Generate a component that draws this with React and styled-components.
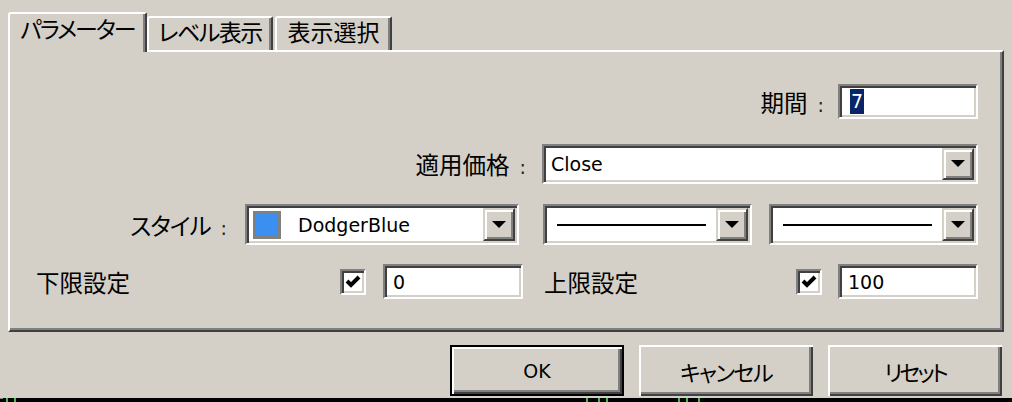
import React from "react";
import styled, { createGlobalStyle, css } from "styled-components";

const Global = createGlobalStyle`
  html, body { margin: 0; padding: 0; }
  body {
    background: #d4d0c8;
    width: 1012px;
    height: 402px;
    overflow: hidden;
    font-family: "DejaVu Sans", "Noto Sans CJK JP", sans-serif;
    color: #000;
  }
`;

const FACE = "#d4d0c8";

const Dialog = styled.div`
  width: 1012px;
  height: 398px;
  display: flex;
  flex-direction: column;
  box-sizing: border-box;
`;

const TabStrip = styled.div`
  height: 50px;
  display: flex;
  align-items: flex-end;
  padding-left: 8px;
`;

const Tab = styled.div`
  position: relative;
  box-sizing: border-box;
  display: flex;
  align-items: center;
  justify-content: center;
  width: ${(p) => p.$w}px;
  margin-left: ${(p) => p.$ml || 0}px;
  background: ${FACE};
  border-left: 2px solid #fff;
  border-top: 2px solid #fff;
  border-right: 2px solid #404040;
  border-top-left-radius: 3px;
  border-top-right-radius: 2px;
  box-shadow: inset -2px 0 0 #808080;
  font-family: "Noto Sans CJK JP", sans-serif;
  font-size: 23px;
  line-height: 1;
  letter-spacing: ${(p) => p.$ls || 0}px;
  font-feature-settings: "palt";
  white-space: nowrap;
  ${(p) =>
    p.$active
      ? css`
          height: 40px;
          margin-bottom: -2px;
          z-index: 1;
          padding-bottom: 10px;
        `
      : css`
          height: 34px;
          padding-bottom: 5px;
        `}
`;

const Panel = styled.div`
  margin-left: 8px;
  width: 996px;
  height: 282px;
  box-sizing: border-box;
  border-style: solid;
  border-width: 2px;
  border-color: #fff #404040 #404040 #fff;
  box-shadow: inset -2px -2px 0 #808080;
  padding: 32px 24px 0 26px;
  display: flex;
  flex-direction: column;
`;

const Row = styled.div`
  display: flex;
  align-items: center;
  justify-content: ${(p) => p.$justify || "flex-end"};
  height: ${(p) => p.$h}px;
  margin-top: ${(p) => p.$mt || 0}px;
`;

const Label = styled.span`
  font-family: "Noto Sans CJK JP", sans-serif;
  font-size: 23.5px;
  letter-spacing: ${(p) => p.$ls || 0}px;
  font-feature-settings: "palt";
  margin-right: ${(p) => p.$mr || 0}px;
  white-space: nowrap;
  flex: ${(p) => (p.$grow ? 1 : "none")};
`;

const Colon = styled.span`
  font-family: "DejaVu Sans", sans-serif;
  font-size: 19px;
  letter-spacing: 0;
  margin-left: 10px;
  color: #222;
`;

const sunken = css`
  box-sizing: border-box;
  border-style: solid;
  border-width: 2px;
  border-color: #808080 #fff #fff #808080;
  box-shadow: inset 2px 2px 0 #404040, inset -2px -2px 0 ${FACE};
  background: #fff;
`;

const TextBox = styled.div`
  ${sunken};
  width: ${(p) => p.$w}px;
  height: 35px;
  display: flex;
  align-items: center;
  padding-left: 8px;
  font-size: 19px;
  margin-left: ${(p) => p.$ml || 0}px;
`;

const Selected = styled.span`
  background: #0a246a;
  color: #fff;
  padding: 0 1px;
  line-height: 25px;
  margin-left: 2px;
`;

const Combo = styled.div`
  ${sunken};
  width: ${(p) => p.$w}px;
  height: ${(p) => p.$h || 40}px;
  padding: 2px;
  display: flex;
  align-items: stretch;
  margin-left: ${(p) => p.$ml || 0}px;
`;

const ComboValue = styled.div`
  flex: 1;
  display: flex;
  align-items: center;
  padding-left: ${(p) => p.$pl || 5}px;
  padding-right: ${(p) => p.$pr || 0}px;
  font-size: 19px;
`;

const DropButton = styled.div`
  box-sizing: border-box;
  width: 32px;
  border-style: solid;
  border-width: 2px;
  border-color: ${FACE} #404040 #404040 ${FACE};
  box-shadow: inset 2px 2px 0 #fff, inset -2px -2px 0 #808080;
  background: ${FACE};
  display: flex;
  align-items: center;
  justify-content: center;
`;

const Swatch = styled.div`
  width: 28px;
  height: 28px;
  box-sizing: border-box;
  border: 3px solid #808080;
  background: ${(p) => p.$color};
  margin-right: 17px;
`;

const LineSample = styled.div`
  flex: 1;
  height: 2px;
  background: #000;
`;

const Half = styled.div`
  display: flex;
  align-items: center;
  width: ${(p) => p.$w}px;
  margin-left: ${(p) => p.$ml || 0}px;
`;

const CheckBox = styled.div`
  ${sunken};
  width: 26px;
  height: 26px;
  display: flex;
  align-items: center;
  justify-content: center;
  margin-right: ${(p) => p.$mr}px;
`;

const ButtonBar = styled.div`
  display: flex;
  justify-content: flex-end;
  gap: 15px;
  padding-right: 10px;
  margin-top: 13px;
`;

const Button = styled.div`
  box-sizing: border-box;
  width: 174px;
  height: 51px;
  display: flex;
  align-items: center;
  justify-content: center;
  background: ${FACE};
  box-shadow: inset 2px 2px 0 #fff, inset -2px -2px 0 #404040,
    inset -4px -4px 0 #808080;
  ${(p) =>
    p.$default &&
    css`
      border: 2px solid #000;
    `}
`;

const ButtonText = styled.span`
  font-family: ${(p) =>
    p.$cjk ? '"Noto Sans CJK JP", sans-serif' : '"DejaVu Sans", sans-serif'};
  font-size: ${(p) => (p.$cjk ? 22 : 19)}px;
  letter-spacing: ${(p) => p.$ls || 0}px;
  font-feature-settings: "palt";
`;

const ChartStrip = styled.svg`
  display: block;
`;

const Arrow = () => (
  <svg width="14" height="8" viewBox="0 0 14 8">
    <polygon points="0,0 14,0 7,7" fill="#000" />
  </svg>
);

const Check = () => (
  <svg width="16" height="15" viewBox="0 0 16 15">
    <polyline
      points="2,7 6,11 14,3"
      fill="none"
      stroke="#000"
      strokeWidth="4"
      strokeLinecap="butt"
      strokeLinejoin="miter"
    />
  </svg>
);

const ComboBox = ({ w, children, pl, pr }) => (
  <Combo $w={w}>
    <ComboValue $pl={pl} $pr={pr}>
      {children}
    </ComboValue>
    <DropButton>
      <Arrow />
    </DropButton>
  </Combo>
);

export default function App() {
  return (
    <>
      <Global />
      <Dialog>
        <TabStrip>
          <Tab $active $w={139} $ls={-2}>
            パラメーター
          </Tab>
          <Tab $w={126} $ls={-1.5}>
            レベル表示
          </Tab>
          <Tab $w={117} $ml={2}>
            表示選択
          </Tab>
        </TabStrip>
        <Panel>
          <Row $h={35}>
            <Label $mr={14}>
              期間<Colon>:</Colon>
            </Label>
            <TextBox $w={140}>
              <Selected>7</Selected>
            </TextBox>
          </Row>
          <Row $h={40} $mt={25}>
            <Label $mr={16}>
              適用価格<Colon>:</Colon>
            </Label>
            <ComboBox w={436} pl={5}>
              Close
            </ComboBox>
          </Row>
          <Row $h={41} $mt={20}>
            <Label $mr={18} $ls={-1}>
              スタイル<Colon>:</Colon>
            </Label>
            <Combo $w={274} $h={41}>
              <ComboValue $pl={4}>
                <Swatch $color="#3a8ff0" />
                DodgerBlue
              </ComboValue>
              <DropButton>
                <Arrow />
              </DropButton>
            </Combo>
            <Combo $w={209} $h={41} $ml={24}>
              <ComboValue $pl={10} $pr={10}>
                <LineSample />
              </ComboValue>
              <DropButton>
                <Arrow />
              </DropButton>
            </Combo>
            <Combo $w={209} $h={41} $ml={17}>
              <ComboValue $pl={10} $pr={10}>
                <LineSample />
              </ComboValue>
              <DropButton>
                <Arrow />
              </DropButton>
            </Combo>
          </Row>
          <Row $h={35} $mt={19} $justify="flex-start">
            <Half $w={487}>
              <Label $grow>下限設定</Label>
              <CheckBox $mr={17}>
                <Check />
              </CheckBox>
              <TextBox $w={140}>0</TextBox>
            </Half>
            <Half $w={434} $ml={21}>
              <Label $grow>上限設定</Label>
              <CheckBox $mr={16}>
                <Check />
              </CheckBox>
              <TextBox $w={140}>100</TextBox>
            </Half>
          </Row>
        </Panel>
        <ButtonBar>
          <Button $default>
            <ButtonText>OK</ButtonText>
          </Button>
          <Button>
            <ButtonText $cjk $ls={-1.5}>
              キャンセル
            </ButtonText>
          </Button>
          <Button>
            <ButtonText $cjk $ls={-3}>
              リセット
            </ButtonText>
          </Button>
        </ButtonBar>
      </Dialog>
      <ChartStrip width="1012" height="4" viewBox="0 0 1012 4">
        <rect x="0" y="0" width="1012" height="4" fill="#000" />
        <rect x="0" y="0" width="3" height="1" fill="#888" />
        <rect x="6" y="0" width="2" height="4" fill="#3fbf3f" />
        <rect x="14" y="0" width="2" height="4" fill="#3fbf3f" />
        <rect x="586" y="0" width="2" height="4" fill="#3fbf3f" />
        <rect x="598" y="0" width="2" height="4" fill="#3fbf3f" />
        <rect x="606" y="0" width="2" height="4" fill="#3fbf3f" />
        <rect x="678" y="0" width="2" height="4" fill="#3fbf3f" />
        <rect x="686" y="0" width="2" height="4" fill="#3fbf3f" />
        <rect x="698" y="0" width="2" height="4" fill="#3fbf3f" />
      </ChartStrip>
    </>
  );
}
